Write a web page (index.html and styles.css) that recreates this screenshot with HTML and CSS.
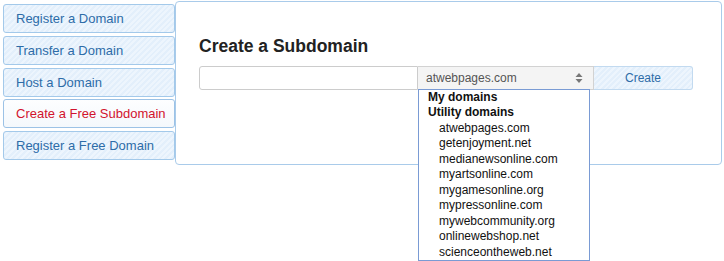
FILE: index.html
```html
<!DOCTYPE html>
<html lang="en">
<head>
<meta charset="UTF-8" />
<meta name="viewport" content="width=device-width, initial-scale=1" />
<title>Create a Subdomain</title>
<link rel="stylesheet" href="styles.css">
</head>
<body>

<div class="wrap">
  <ul class="tabs">
    <li class="tab">Register a Domain</li>
    <li class="tab">Transfer a Domain</li>
    <li class="tab">Host a Domain</li>
    <li class="tab active">Create a Free Subdomain</li>
    <li class="tab">Register a Free Domain</li>
  </ul>

  <section class="panel">
    <h2 class="title">Create a Subdomain</h2>
    <div class="form-row">
      <input type="text" class="name-input" />
      <div class="select">
        <span class="select-value">atwebpages.com</span>
        <svg class="select-arrow" width="8" height="12" viewBox="0 0 8 12">
          <path d="M4 1 L7.5 5 H0.5 Z" fill="#777" />
          <path d="M4 11 L7.5 7 H0.5 Z" fill="#777" />
        </svg>
        <ul class="dropdown">
          <li class="group">My domains</li>
          <li class="group">Utility domains</li>
          <li class="opt">atwebpages.com</li>
          <li class="opt">getenjoyment.net</li>
          <li class="opt">medianewsonline.com</li>
          <li class="opt">myartsonline.com</li>
          <li class="opt">mygamesonline.org</li>
          <li class="opt">mypressonline.com</li>
          <li class="opt">mywebcommunity.org</li>
          <li class="opt">onlinewebshop.net</li>
          <li class="opt">scienceontheweb.net</li>
        </ul>
      </div>
      <button class="create-btn">Create</button>
    </div>
  </section>
</div>

</body>
</html>
```

FILE: styles.css
```css
html, body {
  height: 100%;
}
body {
  margin: 0;
  min-height: 261px;
  font-family: "Liberation Sans", Arial, sans-serif;
  background: #fff;
  color: #222;
}
.wrap {
  display: flex;
  align-items: flex-start;
  padding: 1px 2px 0 3px;
}
.tabs {
  list-style: none;
  margin: 3px 0 0;
  padding: 0;
  width: 172px;
  flex-shrink: 0;
}
.tab {
  box-sizing: border-box;
  height: 29px;
  margin-bottom: 2.75px;
  padding-left: 12px;
  line-height: 27px;
  font-size: 13px;
  color: #2d6ca8;
  border: 1px solid #a3c9ea;
  border-radius: 3px;
  background: repeating-linear-gradient(135deg, #e3effb 0 2px, #edf5fd 2px 4px);
}
.tab.active {
  color: #d2132e;
  background: linear-gradient(#fdfeff, #f4f8fc);
  border-color: #9cc2e6;
}
.panel {
  position: relative;
  flex: 1;
  height: 164px;
  box-sizing: border-box;
  border: 1px solid #a9cbea;
  border-radius: 4px;
  background: #fff;
  padding: 0 0 0 23px;
}
.title {
  margin: 34px 0 10px;
  font-size: 17.5px;
  font-weight: bold;
  color: #222;
  line-height: 20px;
}
.form-row {
  display: flex;
  height: 24px;
}
.name-input {
  box-sizing: border-box;
  width: 219px;
  height: 24px;
  margin: 0;
  border: 1px solid #ccc;
  border-radius: 3px 0 0 3px;
  background: #fff;
  outline: none;
}
.select {
  position: relative;
  box-sizing: border-box;
  width: 176px;
  height: 24px;
  border: 1px solid #d2d2d2;
  border-left: none;
  background: #f4f4f4;
  display: flex;
  align-items: center;
  padding-left: 8px;
  font-size: 12px;
  color: #555;
}
.select-value {
  flex: 1;
}
.select-arrow {
  margin-right: 10px;
}
.dropdown {
  position: absolute;
  left: 0;
  top: 22px;
  width: 172px;
  box-sizing: border-box;
  margin: 0;
  padding: 0;
  list-style: none;
  border: 1px solid #7a9bd4;
  background: #fff;
  font-size: 12px;
  line-height: 15.45px;
  color: #111;
  z-index: 2;
}
.group {
  font-weight: bold;
  padding-left: 9px;
}
.opt {
  padding-left: 20px;
}
.create-btn {
  box-sizing: border-box;
  width: 99px;
  height: 24px;
  margin: 0;
  border: 1px solid #c2daf0;
  border-left: none;
  border-radius: 0 3px 3px 0;
  background: repeating-linear-gradient(135deg, #e3effb 0 2px, #edf5fd 2px 4px);
  font-family: "Liberation Sans", Arial, sans-serif;
  font-size: 12px;
  color: #2d6ca8;
  cursor: pointer;
}
```
